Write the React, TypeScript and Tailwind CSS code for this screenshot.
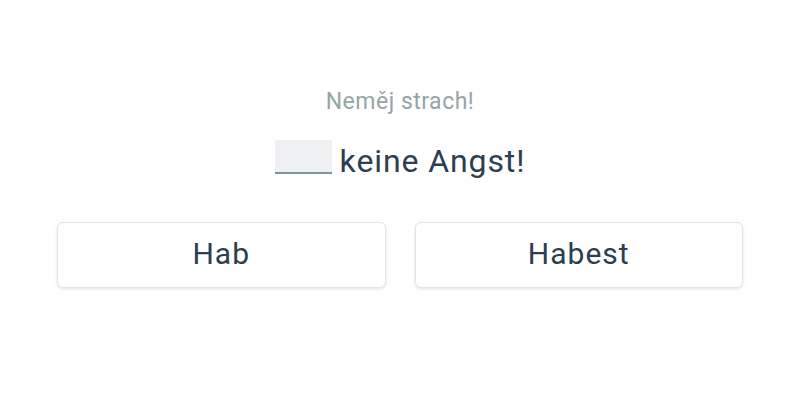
export default function App() {
  return (
    <div className="w-[800px] h-[400px] bg-white flex flex-col items-center" style={{ fontFamily: "Roboto, sans-serif" }}>
      <div className="mt-[88px] h-[28px] text-[23px] leading-[28px] tracking-[0.5px] text-[#95a5a6]">Neměj strach!</div>
      <div className="mt-[24px] h-[42px] flex items-start gap-[8px] text-[32px] leading-[40px] tracking-[0.9px] text-[#2c3e50]">
        <span className="inline-block w-[57px] h-[34px] bg-[#eef0f2] border-b-2 border-[#7d9898]" />
        <span className="mt-[1px]">keine Angst!</span>
      </div>
      <div className="mt-[40px] w-full px-[57px] grid grid-cols-2 gap-[29px]">
        <button className="h-[66px] pb-[4px] bg-white rounded-[6px] border border-[#e3e6e8] shadow-[0_1px_3px_rgba(0,0,0,0.12)] text-[30px] tracking-[1px] text-[#2c3e50]">Hab</button>
        <button className="h-[66px] pb-[4px] bg-white rounded-[6px] border border-[#e3e6e8] shadow-[0_1px_3px_rgba(0,0,0,0.12)] text-[30px] tracking-[1px] text-[#2c3e50]">Habest</button>
      </div>
    </div>
  );
}
